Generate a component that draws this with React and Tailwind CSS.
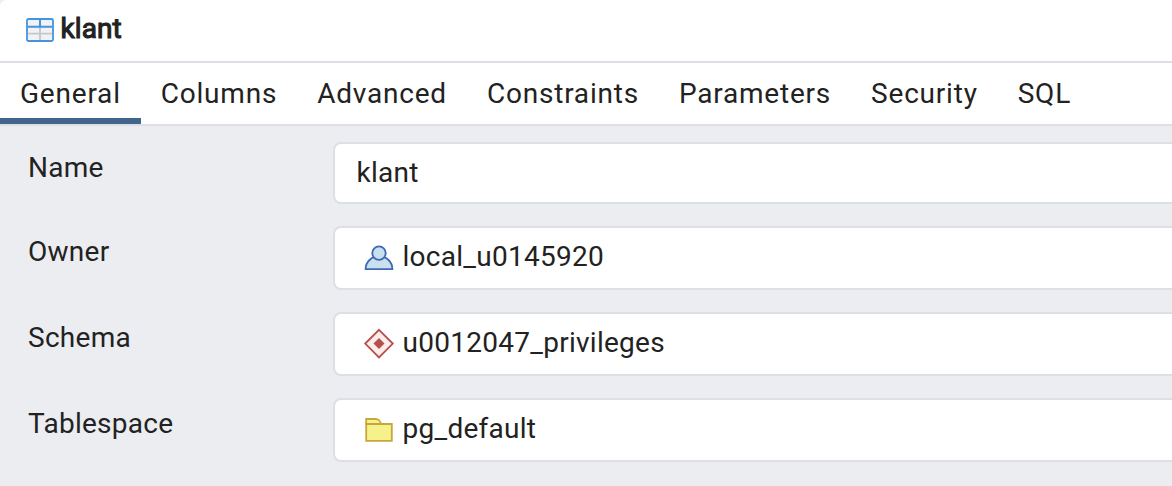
const TABS = ["General", "Columns", "Advanced", "Constraints", "Parameters", "Security", "SQL"];

function TableIcon() {
  return (
    <svg className="h-6 w-7 shrink-0" viewBox="0 0 28 24" fill="none">
      <rect x="1" y="1" width="26" height="22" rx="1.5" fill="#f2f2f3" />
      <path d="M2 15.6H26M14 9V22" stroke="#c3c8d0" strokeWidth="1.9" />
      <path d="M1 8.8H27M14 1V9" stroke="#4494e2" strokeWidth="2" />
      <rect x="1" y="1" width="26" height="22" rx="1.5" stroke="#4494e2" strokeWidth="1.8" />
    </svg>
  );
}

function UserIcon() {
  return (
    <svg className="size-8" viewBox="0 0 32 32" fill="#c9e0ef" stroke="#3f68b8" strokeWidth="1.8">
      <path d="M2.6 27.2C2.6 20 8.5 14.2 16 14.2S29.4 20 29.4 27.2Z" />
      <circle cx="16" cy="11.1" r="6.7" />
    </svg>
  );
}

function SchemaIcon() {
  return (
    <svg className="size-8" viewBox="0 0 32 32">
      <path d="M16 1.8L29.8 15.6L16 29.4L2.2 15.6Z" fill="#fdecec" stroke="#b5504b" strokeWidth="1.8" />
      <path d="M16 10.1L21.5 15.6L16 21.1L10.5 15.6Z" fill="#b5504b" />
    </svg>
  );
}

function FolderIcon() {
  return (
    <svg className="size-8" viewBox="0 0 32 32" fill="#f5f28b" stroke="#c8a63c" strokeWidth="1.8">
      <path d="M3.2 10V5H12.6C15.2 5 17.6 6.8 17.8 10Z" />
      <path d="M3.2 10H28.8V26.8H3.2Z" />
    </svg>
  );
}

function Field({ label, icon, value, plain }) {
  return (
    <div className="flex">
      <div className="w-[333px] shrink-0 pt-[9px] pl-7 leading-[34px] tracking-[0.27px]">{label}</div>
      <div
        className={
          "flex flex-1 items-center rounded-l-lg border-2 border-r-0 border-[#dddfe6] bg-white tracking-[0.27px] " +
          (plain ? "h-[62px] pl-[21.5px]" : "h-16 pl-7")
        }
      >
        {icon}
        <span className={plain ? "" : "pb-0.5 pl-[7.5px]"}>{value}</span>
      </div>
    </div>
  );
}

export default function App() {
  return (
    <div className="h-[486px] w-[1172px] overflow-hidden bg-[#ebedf1] font-[Roboto,sans-serif] text-[28px] text-[#222222]">
      <header className="flex h-[63px] items-center gap-1.5 rounded-tl-[6px] border-b-2 border-[#dddfe6] bg-white pb-0.5 pl-[26px]">
        <TableIcon />
        <h1 className="pb-0.5 pl-[0.5px] leading-8 font-normal tracking-[0.1px] [-webkit-text-stroke:1.1px_#222222]">
          klant
        </h1>
      </header>
      <nav className="flex h-[63px] border-b-2 border-[#dddfe6] bg-white">
        {TABS.map((tab, i) => (
          <button
            key={tab}
            className={
              "h-[61px] border-b-6 px-5 pt-1.5 leading-none tracking-[0.79px] " +
              (i === 0 ? "border-[#41658b]" : "border-transparent")
            }
          >
            {tab}
          </button>
        ))}
      </nav>
      <main className="flex flex-col gap-[22px] pt-4">
        <Field label="Name" value="klant" plain />
        <Field label="Owner" icon={<UserIcon />} value="local_u0145920" />
        <Field label="Schema" icon={<SchemaIcon />} value="u0012047_privileges" />
        <Field label="Tablespace" icon={<FolderIcon />} value="pg_default" />
      </main>
    </div>
  );
}
